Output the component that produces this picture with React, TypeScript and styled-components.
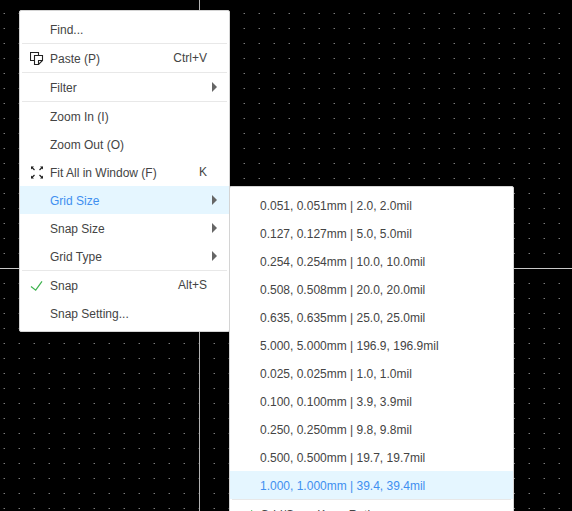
import type { ReactNode } from 'react'
import styled, { createGlobalStyle } from 'styled-components'

const App = () => {
    return (
        <Canvas>
            <Global />
            <Vertical />
            <Horizontal />
            <Menu>
                {menu.map((item) => (
                    <div key={item.label}>
                        {item.line && <Line />}
                        <Item $active={item.active}>
                            <IconHold>{item.icon}</IconHold>
                            <Label>{item.label}</Label>
                            {item.keys && <Keys>{item.keys}</Keys>}
                            {item.sub && <Arrow />}
                        </Item>
                    </div>
                ))}
            </Menu>
            <SubMenu>
                {sizes.map((size) => (
                    <Item key={size} $active={size === current}>
                        <IconHold />
                        <Label>{size}</Label>
                    </Item>
                ))}
                <Line />
                <Item>
                    <IconHold><CheckIcon /></IconHold>
                    <Label>Grid/Snap Keep Ratio</Label>
                </Item>
            </SubMenu>
        </Canvas>
    )
}

export default App

const PasteIcon = () => (
    <svg width="14" height="14" viewBox="0 0 14 14" fill="none" stroke="#222" strokeWidth="1.1">
        <path d="M4.500 9.500h-4v-8h8v3" />
        <path d="M4.500 4.500h8v5l-4 4h-4z" />
        <path d="M12.500 9.500h-4v4" />
    </svg>
)

const FitIcon = () => (
    <svg width="14" height="14" viewBox="0 0 14 14" fill="#222" stroke="#222" strokeWidth="1.2">
        <path d="M1.500 2l3 3M12.500 2l-3 3M1.500 13l3-3M12.500 13l-3-3" />
        <path d="M1 1.500h3L1 4.500zM13 1.500h-3l3 3zM1 13.500h3l-3-3zM13 13.500h-3l3-3z" stroke="none" />
    </svg>
)

const CheckIcon = () => (
    <svg width="14" height="14" viewBox="0 0 14 14" fill="none" stroke="#3eb34f" strokeWidth="1.2">
        <path d="M1 8.500l4.700 3.700L12 3.300" />
    </svg>
)

interface Entry {
    label: string
    keys?: string
    icon?: ReactNode
    line?: boolean
    sub?: boolean
    active?: boolean
}

const menu: Entry[] = [
    { label: 'Find...' },
    { label: 'Paste (P)', keys: 'Ctrl+V', icon: <PasteIcon />, line: true },
    { label: 'Filter', sub: true, line: true },
    { label: 'Zoom In (I)', line: true },
    { label: 'Zoom Out (O)' },
    { label: 'Fit All in Window (F)', keys: 'K', icon: <FitIcon /> },
    { label: 'Grid Size', sub: true, active: true },
    { label: 'Snap Size', sub: true },
    { label: 'Grid Type', sub: true },
    { label: 'Snap', keys: 'Alt+S', icon: <CheckIcon />, line: true },
    { label: 'Snap Setting...' },
]

const current = '1.000, 1.000mm | 39.4, 39.4mil'

const sizes = [
    '0.051, 0.051mm | 2.0, 2.0mil',
    '0.127, 0.127mm | 5.0, 5.0mil',
    '0.254, 0.254mm | 10.0, 10.0mil',
    '0.508, 0.508mm | 20.0, 20.0mil',
    '0.635, 0.635mm | 25.0, 25.0mil',
    '5.000, 5.000mm | 196.9, 196.9mil',
    '0.025, 0.025mm | 1.0, 1.0mil',
    '0.100, 0.100mm | 3.9, 3.9mil',
    '0.250, 0.250mm | 9.8, 9.8mil',
    '0.500, 0.500mm | 19.7, 19.7mil',
    current,
]

const Global = createGlobalStyle`
body {
    margin: 0;
    overflow: hidden;
}
* {
    box-sizing: border-box;
}
`

/* grid dots repeat every 15px */
const Canvas = styled.div`
position: relative;
width: 100%;
height: 100vh;
overflow: hidden;
background-color: #000;
background-image:
    linear-gradient(#000 14px, transparent 14px),
    linear-gradient(90deg, #000 3px, #383838 3px, #383838 4px, #7c7c7c 4px, #7c7c7c 5px, #000 5px);
background-size: 15px 15px;
background-position: 0 14px, 0 0;
font-family: "Liberation Sans", Arial, sans-serif;
font-size: 12px;
color: #444;
`

const Vertical = styled.div`
position: absolute;
left: 199px;
top: 0;
width: 1px;
height: 100%;
background-color: #b4b4b4;
`

const Horizontal = styled.div`
position: absolute;
left: 0;
top: 268px;
width: 100%;
height: 1px;
background-color: #c8c8c8;
`

const Menu = styled.div`
position: absolute;
left: 19px;
top: 10px;
width: 211px;
padding: 4px 0;
border: 1px solid #d4d4d4;
border-radius: 2px;
background-color: white;
`

const SubMenu = styled(Menu)`
left: 229px;
top: 186px;
width: 285px;
`

const Item = styled.div<{ $active?: boolean }>`
display: flex;
align-items: center;
height: 28px;
padding-right: 22px;
white-space: nowrap;
color: ${({ $active }) => ($active ? '#3f8ff0' : '#444')};
background-color: ${({ $active }) => ($active ? '#e5f6ff' : 'transparent')};
`

const IconHold = styled.div`
display: flex;
width: 30px;
padding-left: 10px;
`

const Label = styled.span`
flex: 1;
line-height: 14px;
padding-top: 1px;
`

const Keys = styled.span`
line-height: 14px;
padding-bottom: 1px;
`

const Arrow = styled.div`
margin-right: -10px;
border-left: 5px solid #666;
border-top: 5px solid transparent;
border-bottom: 5px solid transparent;
`

const Line = styled.div`
height: 1px;
margin: 0 2px;
background-color: #e8e8e8;
`
